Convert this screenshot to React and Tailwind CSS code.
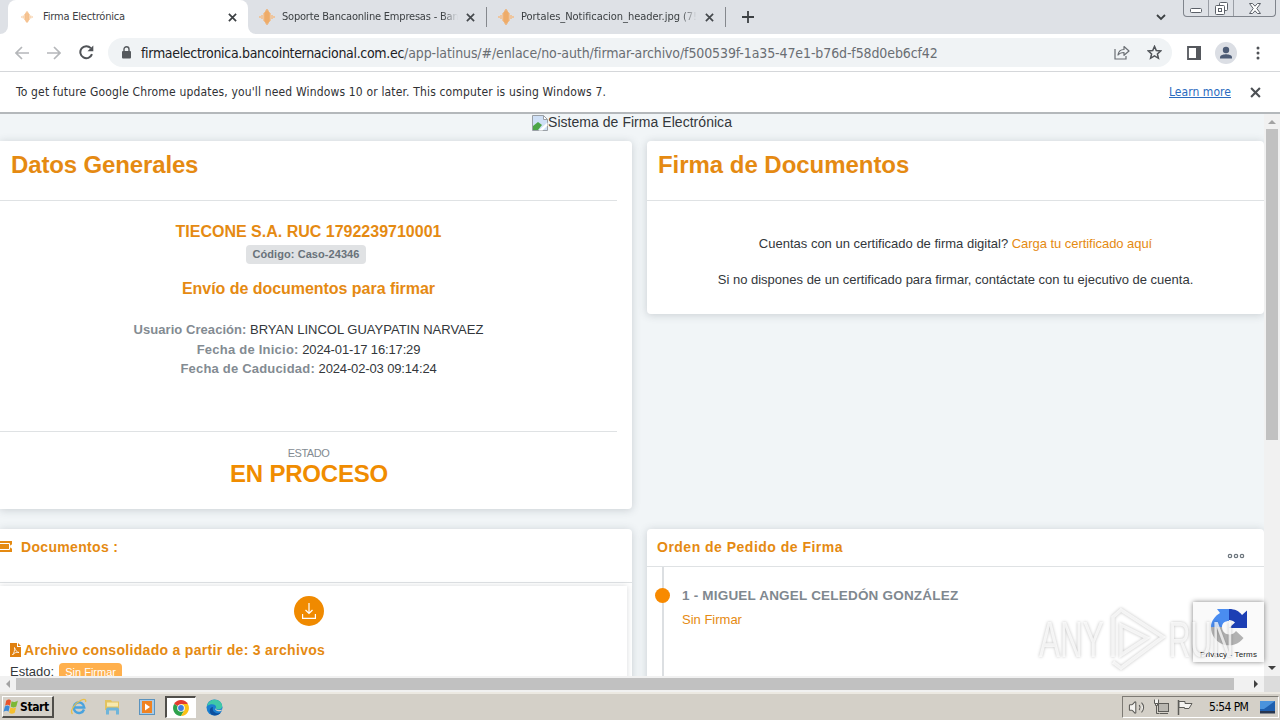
import { Volume2 } from "lucide-react";

const UI = "font-['DejaVu_Sans_Condensed','DejaVu_Sans',sans-serif]";
const ORANGE = "text-[#e58a12]";

function Cross({ size = 9, className = "" }) {
  return (
    <svg width={size} height={size} viewBox="0 0 10 10" className={`shrink-0 ${className}`}>
      <path d="M1 1 L9 9 M9 1 L1 9" stroke="currentColor" strokeWidth="1.9" />
    </svg>
  );
}

function BankIcon({ size = 14, faded }) {
  return (
    <svg width={size} height={size} viewBox="0 0 16 16" opacity={faded ? 0.75 : 1} className="shrink-0">
      <g stroke="#f0a65c" strokeWidth="1.5">
        <path d="M1 7v2M3 6v4M5 4v8M11 4v8M13 6v4M15 7v2" stroke="#f3bd88" />
        <path d="M7 1.5v13M9 1.5v13" />
        <path d="M8 0v16M6 3v10M10 3v10" strokeWidth="1.2" />
      </g>
    </svg>
  );
}

function Tab({ title, tracking }) {
  return (
    <div className="flex h-full w-[227px] shrink-0 items-center">
      <BankIcon size={16} />
      <div className={`ml-[7px] w-[176px] overflow-hidden whitespace-nowrap text-[11px] text-[#3c4043] [mask-image:linear-gradient(to_right,black_91%,transparent)] ${tracking}`}>
        {title}
      </div>
      <Cross className="ml-2 text-[#45494d]" />
    </div>
  );
}

function TabStrip() {
  return (
    <div className="flex h-[34px] shrink-0 bg-[#dee1e6]">
      <div className="flex w-2 shrink-0 bg-white">
        <div className="h-full w-2 rounded-br-lg bg-[#dee1e6]" />
      </div>
      <div className="flex w-60 shrink-0 items-center rounded-t-lg bg-white pl-[13px]">
        <BankIcon size={12} faded />
        <div className="ml-2.5 w-[180px] whitespace-nowrap text-[11px] tracking-[-0.19px] text-[#3c4043]">Firma Electrónica</div>
        <Cross className="ml-[5px] text-[#3c4043]" />
      </div>
      <div className="w-2 shrink-0 bg-white">
        <div className="h-full w-2 rounded-bl-lg bg-[#dee1e6]" />
      </div>
      <div className="flex items-center pl-[3px]">
        <Tab title="Soporte Bancaonline Empresas - Ban" tracking="tracking-[-0.2px]" />
        <div className="h-5 w-px bg-[#85888d]" />
        <div className="w-[11px]" />
        <Tab title="Portales_Notificacion_header.jpg (7!" tracking="tracking-[-0.04px]" />
        <div className="h-5 w-px bg-[#85888d]" />
        <svg width="12" height="12" viewBox="0 0 12 12" className="ml-4">
          <path d="M6 0v12M0 6h12" stroke="#3c4043" strokeWidth="1.8" />
        </svg>
      </div>
      <div className="ml-auto flex items-start">
        <svg width="10" height="7" viewBox="0 0 10 7" className="mt-[14px]">
          <path d="M1 1l4 4 4-4" fill="none" stroke="#3c4043" strokeWidth="1.8" />
        </svg>
        <div className="ml-[17px] mr-1 flex h-[17px] w-[93px] rounded-b border border-t-0 border-[#7f848c] text-[#5b6068]">
          <div className="flex w-[25px] items-center justify-center border-r border-[#9a9ea5]">
            <svg width="12" height="5" viewBox="0 0 12 5" className="mt-1">
              <rect x=".5" y=".5" width="11" height="4" rx="1" fill="#fff" stroke="currentColor" />
            </svg>
          </div>
          <div className="flex w-[25px] items-center justify-center border-r border-[#9a9ea5]">
            <svg width="13" height="13" viewBox="0 0 13 13" fill="#fff" stroke="currentColor">
              <rect x="4.5" y=".5" width="8" height="8" rx="1" />
              <rect x=".5" y="3.500" width="9" height="9" rx="1" />
              <rect x="3.500" y="6.500" width="3" height="3" />
            </svg>
          </div>
          <div className="flex flex-1 items-center justify-center">
            <svg width="12" height="11" viewBox="0 0 12 11">
              <path d="M.5.5h3L6 3.200 8.500.5h3L7.800 5.500l3.700 5h-3L6 7.800 3.500 10.500h-3l3.700-5z" fill="#fff" stroke="currentColor" />
            </svg>
          </div>
        </div>
      </div>
    </div>
  );
}

function Toolbar() {
  return (
    <div className="flex h-[38px] shrink-0 items-center border-b border-[#d5d7da] bg-white">
      <svg width="14" height="14" viewBox="0 0 14 14" className="ml-[15px]" fill="none" stroke="#b5b7ba" strokeWidth="1.7">
        <path d="M14 7H1.500M7 1L1 7l6 6" />
      </svg>
      <svg width="14" height="14" viewBox="0 0 14 14" className="ml-[18px]" fill="none" stroke="#b5b7ba" strokeWidth="1.7">
        <path d="M0 7h12.500M7 1l6 6-6 6" />
      </svg>
      <svg width="15" height="15" viewBox="0 0 15 15" className="ml-[18px]" fill="none" stroke="#505357" strokeWidth="2">
        <path d="M13 9.200A6 6 0 1 1 11.800 3.200" />
        <path d="M14.300.5v5.800H8.500z" fill="#505357" stroke="none" />
      </svg>
      <div className="ml-[14px] flex h-[29px] w-[1064px] items-center rounded-full bg-[#f0f3f5]">
        <svg width="10" height="13" viewBox="0 0 10 13" className="ml-[13px]">
          <rect x="1" y="5" width="9" height="7.500" rx="1" fill="#55595d" />
          <path d="M3 5V3.200a2.500 2.500 0 0 1 5 0V5" fill="none" stroke="#55595d" strokeWidth="1.400" />
        </svg>
        <div className="ml-2.5 flex whitespace-nowrap text-[14px] leading-5">
          <span className="w-[263px] tracking-[-0.32px] text-[#202124]">firmaelectronica.bancointernacional.com.ec</span>
          <span className="tracking-[-0.11px] text-[#6a6e73]">/app-latinus/#/enlace/no-auth/firmar-archivo/f500539f-1a35-47e1-b76d-f58d0eb6cf42</span>
        </div>
        <svg width="16" height="15" viewBox="0 0 16 15" className="ml-auto mr-[17px]" fill="none" stroke="#6b6f74" strokeWidth="1.200">
          <path d="M1 4v10h11v-3" />
          <path d="M4 10c.5-4 3-5.500 6-5.500V1.500L15 6l-5 4.300V7.500C7.500 7.500 5.500 8 4 10z" strokeLinejoin="round" />
        </svg>
        <svg width="15" height="15" viewBox="0 0 16 16" className="mr-[10px]" fill="none" stroke="#505459" strokeWidth="1.600">
          <path d="M8 1.500l1.900 4.400 4.800.4-3.600 3.200 1.100 4.700L8 11.700l-4.200 2.500 1.100-4.700L1.300 6.300l4.800-.4z" />
        </svg>
      </div>
      <svg width="14" height="14" viewBox="0 0 14 14" className="ml-[15px]">
        <path d="M1 1h12v12H1z" fill="#fff" stroke="#55585d" strokeWidth="1.800" />
        <path d="M9 0h5v14H9z" fill="#55585d" />
      </svg>
      <svg width="22" height="22" viewBox="0 0 22 22" className="ml-[14px]">
        <circle cx="11" cy="11" r="11" fill="#dbdee4" />
        <circle cx="11" cy="8" r="3.200" fill="#4c5b75" />
        <path d="M5 16.500v-1.200C5 13 9 12.300 11 12.300s6 .7 6 3v1.200z" fill="#4c5b75" />
      </svg>
      <svg width="4" height="14" viewBox="0 0 4 14" className="ml-[19px]" fill="#505357">
        <circle cx="2" cy="2" r="1.500" />
        <circle cx="2" cy="7" r="1.500" />
        <circle cx="2" cy="12" r="1.500" />
      </svg>
    </div>
  );
}

function InfoBar() {
  return (
    <div className="flex h-[42px] shrink-0 items-center border-b-2 border-[#b4b8bb] bg-white pl-4 text-[12px] text-[#303134]">
      <span className="whitespace-nowrap tracking-[0.16px]">
        To get future Google Chrome updates, you'll need Windows 10 or later. This computer is using Windows 7.
      </span>
      <span className="ml-auto tracking-[0.05px] text-[#2a6bc0] underline">Learn more</span>
      <Cross size={11} className="ml-[19px] mr-[19px] text-[#4c5054]" />
    </div>
  );
}

const CARD = "bg-white shadow-[0_1px_8px_rgba(60,70,80,0.22)]";

function GeneralCard() {
  return (
    <section className={`flex h-[368px] flex-col rounded-r ${CARD}`}>
      <h1 className={`h-[59px] pl-[11px] pt-2 text-[24px] font-bold leading-8 tracking-[-0.14px] ${ORANGE}`}>Datos Generales</h1>
      <div className="flex w-[617px] flex-1 flex-col items-center border-t border-[#dfe2e4]">
        <div className={`mt-[21px] text-[16px] font-bold leading-5 ${ORANGE}`}>TIECONE S.A. RUC 1792239710001</div>
        <div className="mr-[5px] mt-[3px] flex h-[19px] w-[120px] items-center justify-center rounded bg-[#e0e2e4] text-[11px] font-bold tracking-[0.07px] text-[#69727a]">
          Código: Caso-24346
        </div>
        <div className={`mt-[15px] text-[16px] font-bold leading-5 tracking-[-0.04px] ${ORANGE}`}>Envío de documentos para firmar</div>
        <div className="mt-[21px] text-center text-[13px] leading-[19.500px] text-[#33373b]">
          <div>
            <b className="tracking-[0.05px] text-[#838b92]">Usuario Creación:</b> BRYAN LINCOL GUAYPATIN NARVAEZ
          </div>
          <div>
            <b className="tracking-[0.23px] text-[#838b92]">Fecha de Inicio:</b> <span className="tracking-[-0.14px]">2024-01-17 16:17:29</span>
          </div>
          <div>
            <b className="tracking-[0.2px] text-[#838b92]">Fecha de Caducidad:</b> <span className="tracking-[-0.14px]">2024-02-03 09:14:24</span>
          </div>
        </div>
      </div>
      <div className="flex h-[78px] w-[617px] flex-col items-center border-t border-[#dfe2e4]">
        <div className="mt-[14px] text-[11px] leading-[14px] tracking-[-0.5px] text-[#838b92]">ESTADO</div>
        <div className="pl-px text-[24px] font-bold leading-[28px] tracking-[-0.2px] text-[#f08c00]">EN PROCESO</div>
      </div>
    </section>
  );
}

function SignCard() {
  return (
    <section className={`flex h-[173px] flex-col rounded ${CARD}`}>
      <h1 className={`h-[59px] pl-[11px] pt-2 text-[24px] font-bold leading-8 tracking-[-0.04px] ${ORANGE}`}>Firma de Documentos</h1>
      <div className="flex flex-1 flex-col items-center border-t border-[#dfe2e4] pt-[33px] text-[13px] leading-5 text-[#33373b]">
        <p>
          Cuentas con un certificado de firma digital? <span className={`tracking-[-0.05px] ${ORANGE}`}>Carga tu certificado aquí</span>
        </p>
        <p className="mt-4">Si no dispones de un certificado para firmar, contáctate con tu ejecutivo de cuenta.</p>
      </div>
    </section>
  );
}

function DocumentsCard() {
  return (
    <section className={`flex h-[180px] flex-col rounded-tr ${CARD}`}>
      <div className="flex h-[54px] items-start border-b border-[#dfe2e4] pt-2">
        <svg width="12" height="11" viewBox="0 0 12 11" className="mt-1">
          <path d="M0 0h12v3.500a2 2 0 0 0 0 4V11H0z" fill="#e58a12" />
          <path d="M0 2.500h9.500v6H0" fill="none" stroke="#fff" />
        </svg>
        <h2 className={`ml-[9px] text-[14px] font-bold leading-5 tracking-[0.33px] ${ORANGE}`}>Documentos :</h2>
      </div>
      <div className="mt-[3px] flex w-[627px] flex-1 flex-col shadow-[0_0_6px_rgba(60,70,80,0.2)]">
        <div className="flex w-[618px] justify-center pt-[10px]">
          <div className="flex size-[30px] items-center justify-center rounded-full bg-[#f08a00]">
            <svg width="14" height="16" viewBox="0 0 14 16" fill="none" stroke="#fff" strokeWidth="1.200">
              <path d="M7 0v10.500M3.500 7L7 10.500 10.500 7M.6 11v4.400h12.800V11" />
            </svg>
          </div>
        </div>
        <div className="mt-[14px] flex h-5 items-center pl-2.5">
          <svg width="11" height="14" viewBox="0 0 11 14">
            <path d="M0 0h7v4h4v10H0z" fill="#e08110" />
            <path d="M8 0l3 3H8z" fill="#e08110" />
            <path d="M4.500 4.500c1 3 2.500 5 4.500 5-2-.8-5 .2-6.500 2.500C4 10 5 7 4.500 4.500z" fill="none" stroke="#fff" strokeWidth=".8" />
          </svg>
          <h3 className={`ml-[3px] text-[14px] font-bold tracking-[0.31px] ${ORANGE}`}>Archivo consolidado a partir de: 3 archivos</h3>
        </div>
        <div className="mt-[2px] flex items-center pl-2.5 text-[13px] leading-5 text-[#33373b]">
          Estado:
          <span className="ml-[5px] flex h-[18px] w-[63px] items-center justify-center rounded bg-[#ffb04d] text-[11px] text-white">Sin Firmar</span>
        </div>
      </div>
    </section>
  );
}

function OrderCard() {
  return (
    <section className={`flex h-[180px] flex-col rounded-t ${CARD}`}>
      <div className="flex h-[38px] items-start justify-between border-b border-[#dfe2e4] pl-2.5 pr-[19px] pt-2">
        <h2 className={`text-[14px] font-bold leading-5 tracking-[0.49px] ${ORANGE}`}>Orden de Pedido de Firma</h2>
        <svg width="18" height="6" viewBox="0 0 18 6" className="mt-4" fill="none" stroke="#6c757d" strokeWidth="1.200">
          <circle cx="3" cy="3" r="1.700" />
          <circle cx="9" cy="3" r="1.700" />
          <circle cx="15" cy="3" r="1.700" />
        </svg>
      </div>
      <div className="flex flex-1">
        <svg width="15" height="142" viewBox="0 0 15 142" className="ml-2">
          <path d="M8 0v142" stroke="#dcdfe2" strokeWidth="2" />
          <circle cx="7.500" cy="28.500" r="7.500" fill="#f88a00" />
        </svg>
        <div className="ml-3 pt-[19px]">
          <div className="text-[13.500px] font-bold leading-5 tracking-[0.2px] text-[#7f888f]">1 - MIGUEL ANGEL CELEDÓN GONZÁLEZ</div>
          <div className={`mt-1 text-[13px] leading-5 ${ORANGE}`}>Sin Firmar</div>
        </div>
      </div>
    </section>
  );
}

function Recaptcha() {
  return (
    <div className="absolute right-4 top-[488px] flex h-[60px] w-[71px] flex-col items-center bg-[#fafafa] shadow-[0_0_5px_#808080]">
      <svg width="38" height="38" viewBox="0 0 38 38" className="mt-[6px]">
        <path d="M19 1H7l3 4C5 8 1 13 1 19h11c0-4 3-6 7-6z" fill="#4a8cf0" />
        <path d="M19 1c6 0 10 2 13 6l5-4.500V20H19l6-5.500c-1.500-1.500-3.500-2.500-6-2.500z" fill="#1c3fb4" />
        <path d="M1 19a18 18 0 0 0 32.500 11L26 23c-4 6-14 4-14-4z" fill="#b2b2b2" />
      </svg>
      <div className="mt-1 whitespace-nowrap text-[8px] leading-[10px] tracking-[0.14px] text-[#222]">Privacy - Terms</div>
    </div>
  );
}

function Watermark() {
  return (
    <div className="absolute left-[1037px] top-[491px] flex h-[70px] w-[200px] items-center text-[50px] leading-none text-white/75 [filter:drop-shadow(0_0_1.500px_rgba(0,0,0,0.32))]">
      <div className="flex w-[68px] justify-center">
        <span className="scale-x-[0.63]">ANY</span>
      </div>
      <svg width="62" height="66" viewBox="0 0 62 66" className="shrink-0" fill="none" stroke="currentColor" strokeWidth="3.500">
        <path d="M8 50V10l8-7 42 27-42 31-8-6" />
        <path d="M16 18v30l26-17z" />
      </svg>
      <div className="flex w-[68px] justify-center">
        <span className="scale-x-[0.6]">RUN</span>
      </div>
    </div>
  );
}

function Arrow({ d, dark }) {
  return (
    <svg width="10" height="10" viewBox="0 0 10 10" className="shrink-0">
      <path d={d} fill={dark ? "#404040" : "#a3a3a3"} />
    </svg>
  );
}

function Page() {
  return (
    <div className="relative flex h-[578px] shrink-0 flex-col overflow-hidden font-['Liberation_Sans',Arial,sans-serif]">
      <div className="flex h-[562px] shrink-0">
        <main className="flex w-[1264px] flex-col overflow-hidden bg-[#f1f5f7]">
          <div className="flex h-[27px] shrink-0 items-start justify-center text-[14px] leading-[17px] text-[#33373b]">
            <svg width="16" height="16" viewBox="0 0 16 16" className="mt-px">
              <path d="M.5.5h11l4 4v11H.5z" fill="#cfe0f6" stroke="#9aa0a6" />
              <path d="M11.500.5v4h4z" fill="#fff" stroke="#9aa0a6" />
              <path d="M1 15V11l5-4 4 3-4 5z" fill="#4ba546" />
              <path d="M6.500 15.500l9-8v3l-5 5z" fill="#fff" />
            </svg>
            <span className="tracking-[0.04px]">Sistema de Firma Electrónica</span>
          </div>
          <div className="grid shrink-0 grid-cols-[632px_617px] gap-x-[15px] gap-y-5">
            <GeneralCard />
            <div>
              <SignCard />
            </div>
            <DocumentsCard />
            <OrderCard />
          </div>
        </main>
        <div className="flex w-4 flex-col items-center bg-[#f1f1f1] py-[3px]">
          <Arrow d="M5 3l4 4H1z" />
          <div className="mt-[2px] h-[311px] w-[12px] bg-[#c1c1c1]" />
          <div className="mt-auto">
            <Arrow d="M5 7L1 3h8z" dark />
          </div>
        </div>
      </div>
      <div className="flex h-4 items-center bg-[#f1f1f1]">
        <div className="flex w-4 justify-center">
          <Arrow d="M3 5l4-4v8z" />
        </div>
        <div className="h-3 w-[1218px] bg-[#c1c1c1]" />
        <div className="flex w-[30px] justify-end pr-[3px]">
          <Arrow d="M7 5L3 1v8z" dark />
        </div>
        <div className="h-4 w-4 bg-[#dcdcdc]" />
      </div>
      <Recaptcha />
      <Watermark />
    </div>
  );
}

function Taskbar() {
  return (
    <div className="flex h-[28px] shrink-0 items-center border-t-2 border-[#ece9e2] bg-[#d4d0c8]">
      <div className="ml-0.5 flex h-[22px] w-[52px] items-center border border-b-2 border-r-2 border-[#fff] border-b-[#504e4a] border-r-[#504e4a]">
        <svg width="16" height="17" viewBox="0 1 15 13" className="shrink-0" preserveAspectRatio="none">
          <path d="M3 3c2-1.500 3.500-1 4.500 0L6.500 7C5 6 3.500 6 2 7z" fill="#e8542c" />
          <path d="M8 3.500c2 1 3.500.8 6-.5l-1.500 4.500c-2 1-3.500 1-5.300 0z" fill="#7cb836" />
          <path d="M1.800 7.500c1.500-1 3-1 4.500 0l-1.200 4C4 10.500 2.500 10.500.5 11.500z" fill="#3b8ad8" />
          <path d="M7 8c2 1 3.500 1 5.300 0l-1.300 4.200c-2 1-3.500 1-5.200 0z" fill="#f5bf2e" />
        </svg>
        <span className="ml-px text-[12px] font-bold tracking-[-0.4px] text-black">Start</span>
      </div>
      <svg width="18" height="18" viewBox="0 0 18 18" className="ml-[16px]" fill="none">
        <path d="M14 11.500A5.300 5.300 0 1 1 14.300 9.500H5" stroke="#4aa3de" strokeWidth="2.400" />
        <path d="M2.500 16C-.5 13 4.500 5.500 10.500 2.500c4-2 6-1 5 1.500" stroke="#e9c04a" strokeWidth="1.300" />
      </svg>
      <svg width="17" height="16" viewBox="0 0 17 16" className="ml-[16px]">
        <path d="M1 1h6l1 1.500h7V11H1z" fill="#e3c35f" />
        <path d="M3 3.500h11v4H3z" fill="#f7e9ae" />
        <path d="M2 15.500v-5a2 2 0 0 1 2-2h9a2 2 0 0 1 2 2v5h-3v-4H5v4z" fill="#6fb5da" />
      </svg>
      <svg width="16" height="16" viewBox="0 0 16 16" className="ml-[18px]">
        <rect x=".5" y=".5" width="15" height="15" fill="#a9cbe6" stroke="#5b93be" />
        <rect x="3" y="2" width="10" height="12" fill="#f08322" />
        <path d="M6 4.500l5 3.500-5 3.500z" fill="#fff" />
      </svg>
      <div className="ml-[10px] flex h-[22px] w-[31px] items-center justify-center border border-l-2 border-t-2 border-white border-l-[#504e4a] border-t-[#504e4a] bg-white">
        <svg width="16" height="16" viewBox="0 0 16 16">
          <path d="M8 8L1.100 4A8 8 0 0 1 14.900 4z" fill="#e33b2e" />
          <path d="M8 8L1.100 4A8 8 0 0 0 8 16l3.500-6z" fill="#2ea24c" />
          <path d="M8 8V4h6.900A8 8 0 0 1 8 16l3.500-6z" fill="#fbc116" />
          <circle cx="8" cy="8" r="3.800" fill="#fff" />
          <circle cx="8" cy="8" r="2.900" fill="#3f7de0" />
        </svg>
      </div>
      <svg width="17" height="17" viewBox="0 0 17 17" className="ml-[10px]">
        <circle cx="8.500" cy="8.500" r="8" fill="#1b7fd0" />
        <path d="M1 7C2.500.5 9-.5 13 1.800c3.500 2.200 4 6.500 2 8-2 1.200-5.500.8-5-.8C11 6 6 3.500 1 7z" fill="#3fc8a8" />
        <path d="M7 8c-1.500 5 4 7.500 8 5.500-3 4-9.500 4-11 0C3 10.500 5 8 7 8z" fill="#0d4f9e" />
        <path d="M9 8.500c-.5 3 3 4.500 6 3.500l2-1.500-3 .5c-2 .2-5-.5-5-2.500z" fill="#d4d0c8" />
      </svg>
      <div className="ml-auto mr-px flex h-[22px] w-[157px] items-center border border-[#fff] border-l-[#7d7a74] border-t-[#7d7a74] text-[#5d5c58]">
        <Volume2 size={17} strokeWidth={1.5} fill="#f4f3f0" className="ml-[5px]" />
        <svg width="17" height="16" viewBox="0 0 17 16" className="ml-2" fill="#f4f3f0" stroke="currentColor">
          <rect x="5.500" y="4.500" width="10" height="8" fill="#b9b7b1" />
          <path d="M7 14.500h8M3.500 6.500v8h3" fill="none" />
          <path d="M1.500.5v4h4v-4M2.500 4.500v2h2v-2" />
        </svg>
        <svg width="16" height="15" viewBox="0 0 16 15" className="ml-[7px]" fill="#f4f3f0" stroke="currentColor">
          <path d="M1.500 0v15" strokeWidth="1.500" />
          <path d="M2 1.500h6v2h7l-3 5H7.500v-1H2z" />
        </svg>
        <span className="ml-4 whitespace-nowrap text-[12px] tracking-[-0.6px] text-black">5:54 PM</span>
        <svg width="15" height="13" viewBox="0 0 15 13" className="ml-[12px] shrink-0">
          <path d="M0 0h15v10H0z" fill="#1f5fae" />
          <path d="M0 0h15L4 8H0z" fill="#4b93dc" />
          <path d="M0 10h15v2.500H0z" fill="#28364f" />
        </svg>
      </div>
    </div>
  );
}

export default function App() {
  return (
    <div className={`flex h-[720px] w-[1280px] flex-col overflow-hidden bg-white ${UI}`}>
      <TabStrip />
      <Toolbar />
      <InfoBar />
      <Page />
      <Taskbar />
    </div>
  );
}
